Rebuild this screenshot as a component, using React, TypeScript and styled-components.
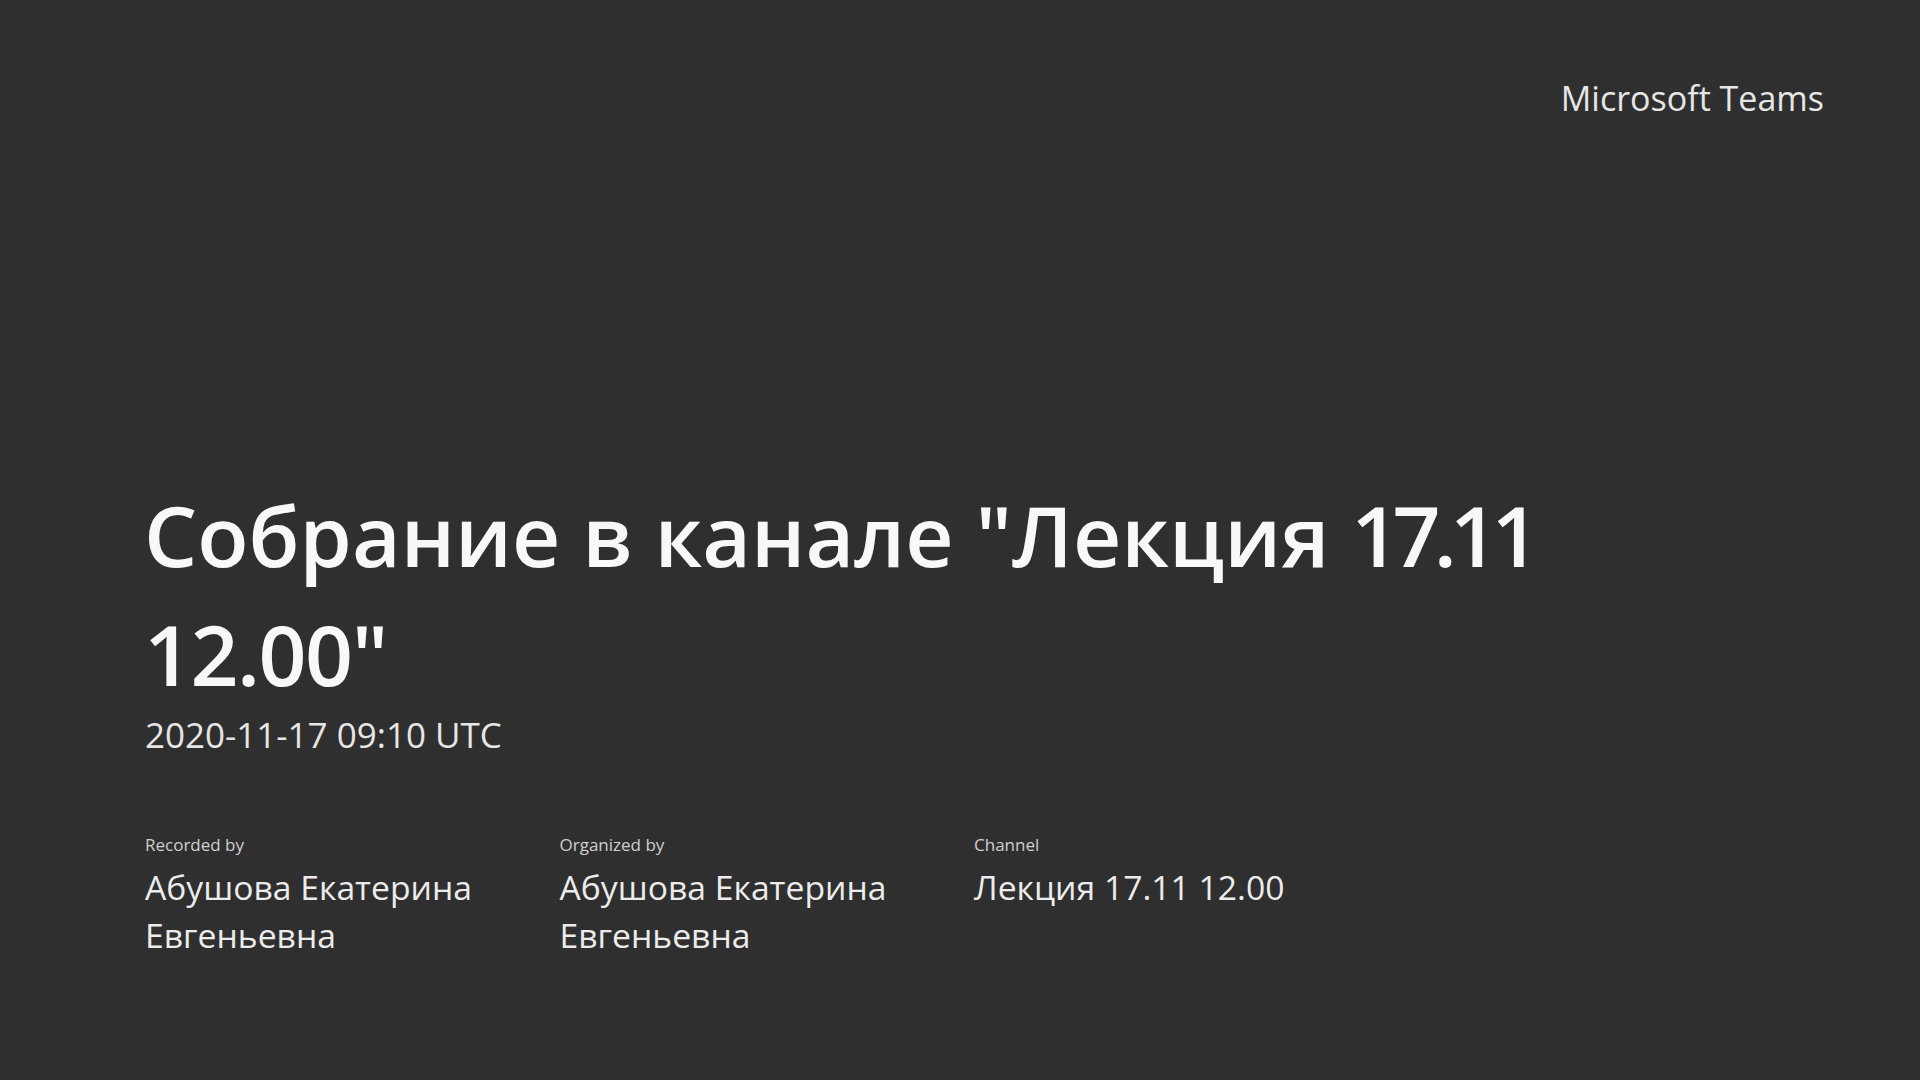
import React, { FC } from "react";
import styled, { createGlobalStyle } from "styled-components";

const GlobalStyle = createGlobalStyle`
  html,
  body {
    margin: 0;
    padding: 0;
    background: #2f2f2f;
  }
`;

const Slide = styled.div`
  box-sizing: border-box;
  width: 1920px;
  height: 1080px;
  display: flex;
  flex-direction: column;
  padding: 74px 96px 0 145px;
  background: #2f2f2f;
  color: #fff;
  font-family: "Open Sans", "Noto Sans", sans-serif;
  overflow: hidden;
`;

const Brand = styled.div`
  align-self: flex-end;
  font-size: 34px;
  line-height: 48px;
  color: #e6e6e6;
`;

const Title = styled.h1`
  margin: 353px 0 0 -1px;
  width: 1500px;
  font-size: 84px;
  line-height: 119px;
  font-weight: 600;
  color: #f8f8f8;
`;

const TitleNumber = styled.span<{ $tracking: number }>`
  letter-spacing: ${(p) => p.$tracking}px;
`;

const MeetingDate = styled.div`
  font-size: 35px;
  line-height: 44px;
  color: #e6e6e6;
`;

const Details = styled.div`
  display: flex;
  margin-top: 76px;
`;

const Detail = styled.div`
  width: 414.5px;
`;

const DetailLabel = styled.div`
  font-size: 17px;
  line-height: 24px;
  color: #d0d0d0;
`;

const DetailValue = styled.div`
  width: 350px;
  margin-top: 6px;
  font-size: 33.7px;
  line-height: 48px;
  color: #ececec;
`;

const details = [
  { label: "Recorded by", value: "Абушова Екатерина Евгеньевна" },
  { label: "Organized by", value: "Абушова Екатерина Евгеньевна" },
  { label: "Channel", value: "Лекция 17.11 12.00" },
];

const App: FC = () => (
  <>
    <GlobalStyle />
    <Slide>
      <Brand>Microsoft Teams</Brand>
      <Title>
        Собрание в канале "Лекция <TitleNumber $tracking={-6.7}>17.11</TitleNumber>{" "}
        <TitleNumber $tracking={-1.5}>12.00"</TitleNumber>
      </Title>
      <MeetingDate>2020-11-17 09:10 UTC</MeetingDate>
      <Details>
        {details.map((item) => (
          <Detail key={item.label}>
            <DetailLabel>{item.label}</DetailLabel>
            <DetailValue>{item.value}</DetailValue>
          </Detail>
        ))}
      </Details>
    </Slide>
  </>
);

export default App;
